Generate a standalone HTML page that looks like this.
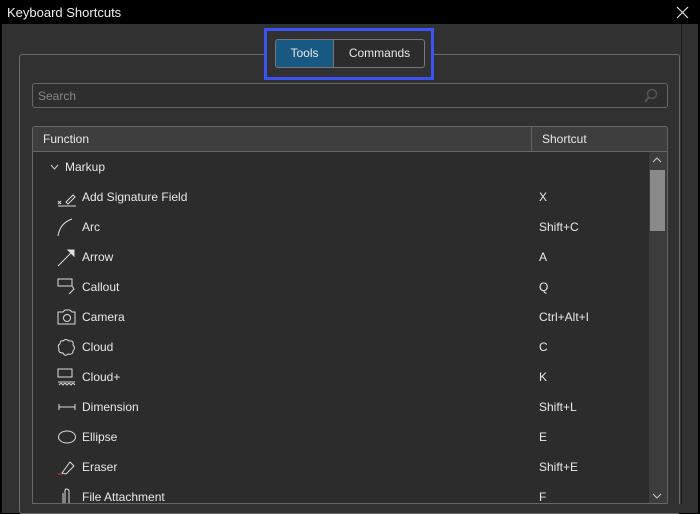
<!DOCTYPE html>
<html><head><style>
body{margin:0;width:700px;height:513px;background:#000;font-family:"Liberation Sans",sans-serif;font-size:12px;color:#e8e8e8;position:relative;overflow:hidden}
.a{position:absolute}
.row{position:absolute;left:33px;width:615px;height:30px}
.row .t{position:absolute;left:49px;top:8px}
.row .s{position:absolute;left:506px;top:8px}
.row svg{position:absolute;left:24px;top:5px}
</style></head><body>
<div class="a" style="left:7px;top:5px;font-size:13px;color:#eee">Keyboard Shortcuts</div>
<svg class="a" style="left:676px;top:6px" width="13" height="13"><path d="M1 1L12 12M12 1L1 12" stroke="#ddd" stroke-width="1.2"/></svg>
<div class="a" style="left:2px;top:24px;width:696px;height:489px;background:#313131"></div>
<div class="a" style="left:681px;top:24px;width:1px;height:489px;background:#1e1e1e"></div>
<div class="a" style="left:19px;top:54px;width:661px;height:460px;border:1px solid #6a6a6a;border-radius:3px;box-sizing:border-box"></div>
<div class="a" style="left:264px;top:28px;width:170px;height:52px;border:3px solid #3c52f2;box-sizing:border-box;background:#313131"></div>
<div class="a" style="left:275px;top:39px;width:150px;height:29px;border:1px solid #777;border-radius:3px;box-sizing:border-box;overflow:hidden;background:#2c2c2c">
<div class="a" style="left:0;top:0;width:57px;height:27px;background:#185983;border-right:1px solid #777;text-align:center;line-height:27px">Tools</div>
<div class="a" style="left:58px;top:0;width:91px;height:27px;text-align:center;line-height:27px">Commands</div></div>
<div class="a" style="left:32px;top:83px;width:636px;height:25px;border:1px solid #666;border-radius:3px;box-sizing:border-box;background:#2e2e2e"><span class="a" style="left:5px;top:5px;color:#888">Search</span>
<svg class="a" style="left:610px;top:4px" width="16" height="16"><circle cx="9" cy="6" r="4.5" fill="none" stroke="#555" stroke-width="1.5"/><path d="M6 9L2 14" stroke="#555" stroke-width="2"/></svg></div>
<div class="a" style="left:32px;top:126px;width:636px;height:379px;border:1px solid #666;border-radius:3px;box-sizing:border-box;background:#2c2c2c;overflow:hidden">
<div class="a" style="left:0;top:0;width:634px;height:24px;background:#3e3e3e;border-bottom:1px solid #666"></div>
<div class="a" style="left:498px;top:0;width:1px;height:24px;background:#666"></div>
<span class="a" style="left:10px;top:5px">Function</span><span class="a" style="left:509px;top:5px">Shortcut</span>
<div class="a" style="left:616px;top:25px;width:18px;height:352px;background:#3c3c3c"></div>
<div class="a" style="left:617px;top:43px;width:15px;height:61px;background:#8a8a8a"></div>
<svg class="a" style="left:619px;top:30px" width="10" height="6"><path d="M1 5L5 1L9 5" stroke="#ccc" fill="none"/></svg>
<svg class="a" style="left:619px;top:366px" width="10" height="6"><path d="M1 1L5 5L9 1" stroke="#ccc" fill="none"/></svg>
</div>
<svg class="a" style="left:50px;top:164px" width="9" height="6"><path d="M1 1L4.5 5L8 1" stroke="#ccc" fill="none"/></svg>
<span class="a" style="left:65px;top:160px">Markup</span>
<div class="row" style="top:182px"><svg width="20" height="20" fill="none" stroke="#ddd"><path d="M1 14L4 17M4 14L1 17M1 19H19M9 15L16 8L18 10L11 17Z"/></svg><span class="t">Add Signature Field</span><span class="s">X</span></div>
<div class="row" style="top:212px"><svg width="20" height="20" fill="none" stroke="#ddd"><path d="M1 19Q3 6 15 2"/></svg><span class="t">Arc</span><span class="s">Shift+C</span></div>
<div class="row" style="top:242px"><svg width="20" height="20" fill="none" stroke="#ddd"><path d="M1 19L15 5"/><path d="M11 3L17 3L17 9Z" fill="#ddd"/></svg><span class="t">Arrow</span><span class="s">A</span></div>
<div class="row" style="top:272px"><svg width="20" height="20" fill="none" stroke="#ddd"><path d="M1 2H15V9H1ZM15 9L17 12L12 17"/></svg><span class="t">Callout</span><span class="s">Q</span></div>
<div class="row" style="top:302px"><svg width="20" height="20" fill="none" stroke="#ddd"><path d="M1 5H6L8 3H13L15 5H18V17H1Z"/><circle cx="10" cy="11" r="3.5"/></svg><span class="t">Camera</span><span class="s">Ctrl+Alt+I</span></div>
<div class="row" style="top:332px"><svg width="20" height="20" fill="none" stroke="#ddd"><path d="M6 4Q9 1 12 4Q17 3 16 8Q19 11 16 14Q16 18 11 17Q8 20 6 16Q1 16 2 12Q0 8 3 7Q3 3 6 4Z"/></svg><span class="t">Cloud</span><span class="s">C</span></div>
<div class="row" style="top:362px"><svg width="20" height="20" fill="none" stroke="#ddd"><path d="M1 2H15V10H1ZM1 15H18M2 18Q4 15 6 18Q8 15 10 18Q12 15 14 18Q16 15 18 18"/></svg><span class="t">Cloud+</span><span class="s">K</span></div>
<div class="row" style="top:392px"><svg width="20" height="20" fill="none" stroke="#ddd"><path d="M2 10H18M2 7V13M18 7V13"/></svg><span class="t">Dimension</span><span class="s">Shift+L</span></div>
<div class="row" style="top:422px"><svg width="20" height="20" fill="none" stroke="#ddd"><ellipse cx="10" cy="10" rx="8.5" ry="6"/></svg><span class="t">Ellipse</span><span class="s">E</span></div>
<div class="row" style="top:452px"><svg width="20" height="20" fill="none" stroke="#ddd"><path d="M5 16L13 5L17 9L9 17Z"/><path d="M1 17H6" stroke="#c33"/></svg><span class="t">Eraser</span><span class="s">Shift+E</span></div>
<div class="row" style="top:482px"><svg width="20" height="20" fill="none" stroke="#ddd"><path d="M6 6V17Q6 19 9 19Q12 19 12 17V4Q12 2 9 2Q8 2 8 4V16"/></svg><span class="t">File Attachment</span><span class="s">F</span></div>
<div class="a" style="left:32px;top:504px;width:650px;height:9px;background:#313131"></div>
<div class="a" style="left:32px;top:503px;width:636px;height:1px;background:#666"></div>
</body></html>
